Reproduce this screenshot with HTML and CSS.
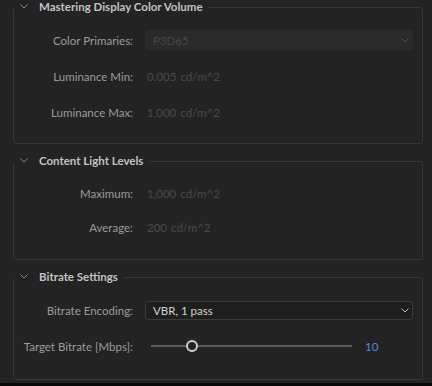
FILE: index.html
```html
<!DOCTYPE html>
<html lang="en">
<head>
    <meta charset="UTF-8">
    <meta name="viewport" content="width=device-width, initial-scale=1.0">
    <title>HDR Settings</title>
    <link rel="stylesheet" href="styles.css">
</head>
<body>

<div class="page">

<fieldset class="group group-mastering">
    <legend>
        <svg class="twisty" width="8" height="5" viewBox="0 0 8 5"><path d="M0.5 0.5 L4 4 L7.5 0.5" fill="none" stroke="currentColor" stroke-width="1"/></svg>
        Mastering Display Color Volume
    </legend>
    <div class="row">
        <span class="label">Color Primaries:</span>
        <div class="select disabled">
            <span>P3D65</span>
            <svg width="8" height="5" viewBox="0 0 8 5"><path d="M0.5 0.5 L4 4 L7.5 0.5" fill="none" stroke="currentColor" stroke-width="1"/></svg>
        </div>
    </div>
    <div class="row">
        <span class="label">Luminance Min:</span>
        <span class="value">0.005<span class="unit">cd/m^2</span></span>
    </div>
    <div class="row">
        <span class="label">Luminance Max:</span>
        <span class="value">1,000<span class="unit">cd/m^2</span></span>
    </div>
</fieldset>

<fieldset class="group group-light">
    <legend>
        <svg class="twisty" width="8" height="5" viewBox="0 0 8 5"><path d="M0.5 0.5 L4 4 L7.5 0.5" fill="none" stroke="currentColor" stroke-width="1"/></svg>
        Content Light Levels
    </legend>
    <div class="row">
        <span class="label">Maximum:</span>
        <span class="value">1,000<span class="unit">cd/m^2</span></span>
    </div>
    <div class="row">
        <span class="label">Average:</span>
        <span class="value">200<span class="unit">cd/m^2</span></span>
    </div>
</fieldset>

<fieldset class="group group-bitrate">
    <legend>
        <svg class="twisty" width="8" height="5" viewBox="0 0 8 5"><path d="M0.5 0.5 L4 4 L7.5 0.5" fill="none" stroke="currentColor" stroke-width="1"/></svg>
        Bitrate Settings
    </legend>
    <div class="row">
        <span class="label">Bitrate Encoding:</span>
        <div class="select">
            <span>VBR, 1 pass</span>
            <svg width="8" height="5" viewBox="0 0 8 5"><path d="M0.5 0.5 L4 4 L7.5 0.5" fill="none" stroke="currentColor" stroke-width="1"/></svg>
        </div>
    </div>
    <div class="row">
        <span class="label">Target Bitrate [Mbps]:</span>
        <div class="slider-wrap">
            <div class="slider">
                <div class="thumb"></div>
            </div>
            <span class="slider-value">10</span>
        </div>
    </div>
</fieldset>

</div>

</body>
</html>
```

FILE: styles.css
```css
html {
    background-color: #080808;
}

body {
    margin: 0;
    font-family: Lato, "Open Sans", sans-serif;
    font-size: 11.5px;
    color: #9a9a9a;
}

.page {
    height: 383px;
    background-color: #232323;
    padding: 0 9px 0 13px;
    box-sizing: border-box;
    display: flex;
    flex-direction: column;
    gap: 10px;
}

.group {
    margin: 0;
    border: 1px solid #363636;
    border-radius: 3px;
    padding: 16px 9px 21px 0;
    display: flex;
    flex-direction: column;
    gap: 16px;
    min-width: 0;
}

.group-light {
    padding: 15px 9px 22px 0;
    gap: 14px;
}

.group-bitrate {
    padding: 16px 9px 23px 0;
}

legend {
    margin-left: 0;
    padding: 0 6px 0 6px;
    line-height: 14px;
    font-weight: bold;
    font-size: 11.5px;
    color: #c2c2c2;
    display: flex;
    align-items: center;
}

.twisty {
    color: #8a8a8a;
    margin-right: 11px;
    margin-top: -2px;
}

.row {
    display: grid;
    grid-template-columns: 119px 1fr;
    column-gap: 12px;
    align-items: center;
    height: 20px;
}

.label {
    text-align: right;
    white-space: nowrap;
}

.value {
    color: #4a4a4a;
    padding-left: 2px;
}

.unit {
    margin-left: 4px;
}

.select {
    height: 19px;
    border-radius: 3px;
    border: 1px solid #3a3a3a;
    background-color: #1e1e1e;
    color: #d2d2d2;
    display: flex;
    align-items: center;
    justify-content: space-between;
    padding: 0 3px 0 7px;
    box-sizing: border-box;
}

.select svg {
    color: #b8b8b8;
}

.select.disabled {
    height: 20px;
    border-color: #2a2a2a;
    background-color: #2a2a2a;
    color: #474747;
}

.select.disabled svg {
    color: #505050;
}

.slider-wrap {
    display: flex;
    align-items: center;
    padding-left: 6px;
}

.slider {
    position: relative;
    width: 201px;
    height: 2px;
    background-color: #5a5a5a;
}

.thumb {
    position: absolute;
    left: 35px;
    top: -5px;
    width: 8px;
    height: 8px;
    border: 2px solid #cfcfcf;
    border-radius: 50%;
    background-color: #232323;
}

.slider-value {
    margin-left: 13px;
    color: #4b8fd6;
}
```
